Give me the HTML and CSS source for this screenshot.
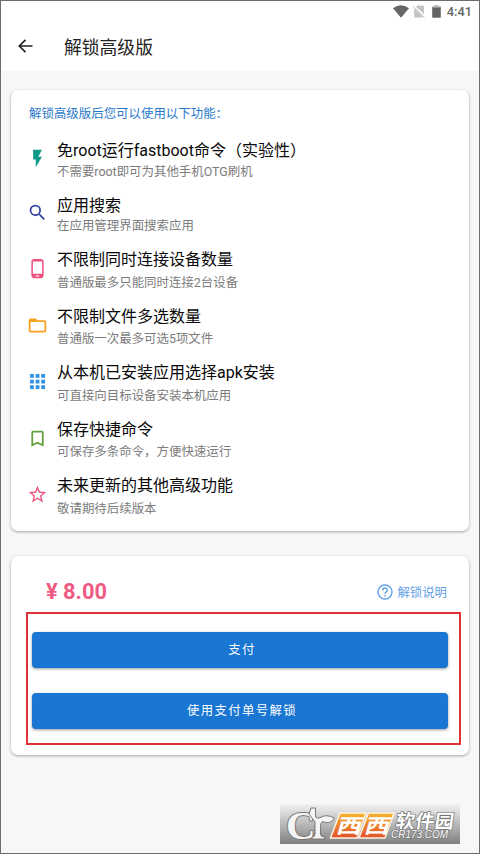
FILE: index.html
```
<!DOCTYPE html>
<html lang="zh-CN">
<head>
<meta charset="utf-8">
<title>解锁高级版</title>
<link rel="stylesheet" href="styles.css">
</head>
<body>
<div class="screen">
  <header class="top">
    <div class="status">
      <svg class="wifi" width="16" height="13" viewBox="0 0 16 13"><path d="M0 3.3Q8-2.7 16 3.3L8 12.8Z" fill="#666"/></svg>
      <svg class="nosim" width="12" height="13" viewBox="0 0 12 13"><path d="M4.2.5H10Q11 .5 11 1.5V9.2L3 1.7ZM1.2 3.3 10.6 12.4H2Q1.2 12.4 1.2 11.6Z" fill="#c4c4c4"/><path d="M.3 1.4 11.5 12.6" stroke="#c4c4c4" stroke-width="1"/></svg>
      <svg class="battery" width="9" height="13" viewBox="0 0 9 13"><path d="M2.5 0h4v1.2H9V4H0V1.2h2.5Z" fill="#bbb"/><path d="M.2 2.6H8.8V12q0 .8-.8.8H1q-.8 0-.8-.8Z" fill="#646464"/></svg>
      <span class="clock">4:41</span>
    </div>
    <div class="bar">
      <svg width="15" height="14" viewBox="0 0 15 14" fill="none" stroke="#222" stroke-width="1.7"><path d="M7.5.8 1.3 7l6.2 6.2M1.5 7H14.5"/></svg>
      <h1>解锁高级版</h1>
    </div>
  </header>

  <section class="card features">
    <p class="intro">解锁高级版后您可以使用以下功能：</p>
    <ul>
      <li class="tight"><svg viewBox="0 0 24 24" fill="#109888"><path d="M7 2v11h3v9l7-12h-4l4-8Z"/></svg><div><h2>免root运行fastboot命令（实验性）</h2><p>不需要root即可为其他手机OTG刷机</p></div></li>
      <li class="tight"><svg viewBox="0 0 24 24" fill="#35459d"><path d="M15.5 14h-.79l-.28-.27A6.47 6.47 0 0 0 16 9.5 6.5 6.5 0 1 0 9.5 16c1.61 0 3.09-.59 4.23-1.57l.27.28v.79l5 4.99L20.49 19l-4.99-5zm-6 0a4.5 4.5 0 1 1 0-9 4.5 4.5 0 0 1 0 9z"/></svg><div><h2>应用搜索</h2><p>在应用管理界面搜索应用</p></div></li>
      <li><svg viewBox="0 0 24 24" fill="#f0527f"><path d="M16 1H8C6.340 1 5 2.340 5 4v16c0 1.660 1.340 3 3 3h8c1.660 0 3-1.340 3-3V4c0-1.660-1.340-3-3-3zm-2 20h-4v-1h4v1zm3.250-3H6.750V4h10.500v14z"/></svg><div><h2>不限制同时连接设备数量</h2><p>普通版最多只能同时连接2台设备</p></div></li>
      <li><svg viewBox="0 0 24 24" fill="#f9a01f"><path d="M20 6h-8l-2-2H4c-1.100 0-1.990.9-1.990 2L2 18c0 1.100.9 2 2 2h16c1.100 0 2-.9 2-2V8c0-1.100-.9-2-2-2zm0 12H4V8h16v10z"/></svg><div><h2>不限制文件多选数量</h2><p>普通版一次最多可选5项文件</p></div></li>
      <li><svg viewBox="0 0 24 24" fill="#2e91e5"><path d="M3.500 3.500h4.300v4.300H3.500zM9.900 3.500h4.300v4.300H9.900zM16.300 3.500h4.300v4.300h-4.300zM3.500 9.900h4.300v4.300H3.500zM9.900 9.900h4.300v4.300H9.900zM16.300 9.900h4.300v4.300h-4.300zM3.500 16.300h4.300v4.300H3.500zM9.900 16.300h4.300v4.300H9.900zM16.300 16.300h4.300v4.300h-4.300z"/></svg><div><h2>从本机已安装应用选择apk安装</h2><p>可直接向目标设备安装本机应用</p></div></li>
      <li><svg viewBox="0 0 24 24" fill="#649f3c"><path d="M17 3H7c-1.100 0-2 .9-2 2v16l7-3 7 3V5c0-1.100-.9-2-2-2zm0 15-5-2.180L7 18V5h10v13z"/></svg><div><h2>保存快捷命令</h2><p>可保存多条命令，方便快速运行</p></div></li>
      <li><svg viewBox="0 0 24 24" fill="#ec5680"><path d="m22 9.240-7.190-.62L12 2 9.190 8.630 2 9.240l5.460 4.730L5.820 21 12 17.270 18.180 21l-1.630-7.030L22 9.240zM12 15.400l-3.760 2.270 1-4.280-3.320-2.880 4.380-.38L12 6.100l1.710 4.040 4.380.38-3.320 2.880 1 4.280L12 15.400z"/></svg><div><h2>未来更新的其他高级功能</h2><p>敬请期待后续版本</p></div></li>
    </ul>
  </section>

  <section class="card pay">
    <div class="price-row">
      <strong>¥ 8.00</strong>
      <a class="help"><svg width="16" height="16" viewBox="0 0 16 16" fill="none" stroke="#64a0e6" stroke-width="1.400"><circle cx="8" cy="8" r="7"/><path d="M5.700 6.400C5.700 3.300 10.300 3.300 10.300 6.200 10.300 8 8 8 8 9.900M8 11.100V12.500"/></svg>解锁说明</a>
    </div>
    <div class="actions">
      <button>支付</button>
      <button>使用支付单号解锁</button>
    </div>
  </section>

  <svg class="mark" width="180" height="40" viewBox="0 0 180 40">
    <defs>
      <linearGradient id="plate" x2="0" y2="1"><stop offset="0" stop-color="#f2f2f2"/><stop offset=".5" stop-color="#b9b9b9"/><stop offset="1" stop-color="#808080"/></linearGradient>
      <linearGradient id="warm" x2="0" y2="1"><stop offset="0" stop-color="#f5b52e"/><stop offset="1" stop-color="#e2512a"/></linearGradient>
    </defs>
    <rect width="180" height="40" fill="url(#plate)"/>
    <g class="letters">
      <text class="big" x="6" y="35">C</text>
      <path class="sprout" d="M31 4h4.500v9q3 2.500 6 0 5-3 13 1-4 7-12 3.500-2 1-2 5.500v7q0 3 4 3v2H32v-2q3 0 3-3V18q-3-4-6-8Z"/>
      <path class="tile" d="M60 9h26L77 34H50.500ZM88.500 9h25.500l-9 25H79Z"/>
      <text class="xi" transform="translate(55.500 29) skewX(-16) scale(1 .8)">西</text>
      <text class="xi" transform="translate(83.500 29) skewX(-16) scale(1 .8)">西</text>
      <text class="soft" transform="translate(115 23.500) skewX(-8)" textLength="58">软件园</text>
      <text class="site" x="111" y="34" textLength="57" lengthAdjust="spacingAndGlyphs">CR173.COM</text>
    </g>
  </svg>
</div>
</body>
</html>
```
FILE: styles.css
```
* { box-sizing: border-box; margin: 0; padding: 0; }
body { font-family: Roboto, "Noto Sans CJK SC", sans-serif; }
.screen {
  position: relative;
  height: 854px;
  border: 1px solid #706b6e;
  background: #f7f7f7;
  overflow: hidden;
}
.top { height: 70px; background: #fff; }
.status {
  display: flex;
  align-items: center;
  justify-content: flex-end;
  height: 20px;
  padding-right: 7px;
}
.wifi { margin-right: 4px; }
.nosim { margin-right: 7px; }
.battery { margin-right: 6px; }
.clock { font-size: 12.800px; font-weight: 500; color: #666; line-height: 20px; padding-top: 1px; }
.bar { display: flex; align-items: center; height: 50px; padding-left: 17px; }
h1 { margin-left: 31px; padding-top: 3px; font-size: 17.800px; font-weight: 400; color: #222; line-height: 28px; }
.card {
  margin: 0 10px;
  background: #fff;
  border-radius: 7px;
  box-shadow: 0 1px 3px rgba(0, 0, 0, .35);
}
.features { height: 441px; margin-top: 19px; padding: 14px 18px 0; }
.intro { height: 36.400px; font-size: 12.450px; line-height: 20px; color: #2878ca; }
ul { list-style: none; }
li { display: flex; height: 56.500px; }
li svg { flex: none; width: 21px; height: 21px; margin: 9px 9px 0 -2px; }
li h2 { font-size: 16px; font-weight: 400; line-height: 22px; color: #080808; }
li p { margin-top: 2.500px; font-size: 12.450px; line-height: 18px; color: #7c7c7c; }
.tight { height: 54.500px; }
.tight svg { margin-top: 7.500px; }
.tight p { margin-top: .500px; }
.pay { height: 199px; margin-top: 25px; }
.price-row {
  display: flex;
  align-items: center;
  justify-content: space-between;
  height: 56px;
  padding: 15px 22px 0 35px;
}
.price-row strong { font-size: 21.800px; font-weight: 700; line-height: 28px; color: #ef5b83; }
.help { display: flex; align-items: center; gap: 4px; font-size: 12.400px; color: #64a0e6; }
.actions {
  display: flex;
  flex-direction: column;
  gap: 25px;
  height: 133px;
  margin: 0 8px 0 15px;
  padding: 18px 11px 0 4px;
  border: 2px solid #e03236;
}
button {
  height: 36px;
  padding-left: 4px;
  border: 0;
  border-radius: 4px;
  background: #1976d2;
  color: #fff;
  font: 400 12.400px/36px Roboto, "Noto Sans CJK SC", sans-serif;
  letter-spacing: 1.350px;
  box-shadow: 0 1px 3px rgba(0, 0, 0, .4);
}
.mark { position: absolute; left: 279px; top: 803px; overflow: visible; }
.letters text { paint-order: stroke; stroke-linejoin: round; font-family: "Liberation Sans", "Noto Sans CJK SC", sans-serif; }
.letters .big { font: 700 41px "Liberation Serif", serif; fill: #f5f5f5; stroke: #777; stroke-width: 2px; }
.sprout { fill: #f5f5f5; stroke: #777; stroke-width: 1px; }
.tile { fill: url(#warm); stroke: #fff2df; stroke-width: 1.500px; }
.xi { font-size: 25px; font-weight: 700; fill: #fff; }
.soft { font-size: 19px; font-weight: 700; fill: #fff; stroke: #777; stroke-width: 1.500px; }
.site { font-size: 10.500px; font-style: italic; font-weight: 400; fill: #fff; stroke: #777; stroke-width: 1.500px; }
```
